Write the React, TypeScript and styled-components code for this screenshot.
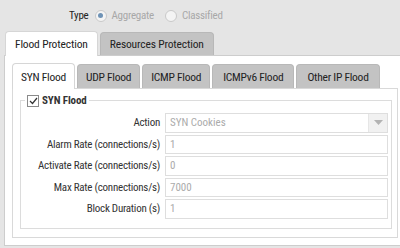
import React from "react";
import styled, { createGlobalStyle } from "styled-components";

const GlobalStyle = createGlobalStyle`
  html, body { margin: 0; padding: 0; }
  body {
    background: #e5e5e5;
    overflow: hidden;
    font-family: "Roboto Condensed", "Liberation Sans Narrow", "Arial Narrow", sans-serif;
    color: #333;
  }
`;

const Page = styled.div`
  width: 420px;
  height: 248px;
  padding-left: 4px;
  box-sizing: border-box;
`;

const TypeRow = styled.div`
  display: flex;
  align-items: center;
  height: 31px;
  padding-left: 65px;
  font-size: 11px;
  letter-spacing: -0.25px;
`;

const TypeLabel = styled.span`
  color: #222;
  margin-right: 6px;
`;

const RadioItem = styled.label`
  display: flex;
  align-items: center;
  gap: 5px;
  color: #a8a8a8;
  margin-right: 11px;
`;

const RadioCircle = styled.span<{ $checked?: boolean }>`
  width: 10px;
  height: 10px;
  border-radius: 50%;
  border: 1px solid #c9c9c9;
  background: #f4f4f4;
  display: flex;
  align-items: center;
  justify-content: center;
  &::after {
    content: "";
    width: 5px;
    height: 5px;
    border-radius: 50%;
    background: ${(p) => (p.$checked ? "#6f93b6" : "transparent")};
  }
`;

const TabBar = styled.div<{ $inner?: boolean }>`
  display: flex;
  align-items: flex-end;
  gap: 2px;
  height: ${(p) => (p.$inner ? "25px" : "24px")};
  padding-left: ${(p) => (p.$inner ? "0" : "1px")};
  position: relative;
  z-index: 1;
`;

const Tab = styled.div<{ $active?: boolean; $inner?: boolean; $wide?: boolean }>`
  box-sizing: border-box;
  height: ${(p) => (p.$active ? (p.$inner ? "26px" : "25px") : p.$inner ? "24px" : "23px")};
  margin-bottom: ${(p) => (p.$active ? "-1px" : "0")};
  padding: 0 ${(p) => (p.$wide ? "10px" : p.$inner ? "8px" : "9px")};
  display: flex;
  align-items: center;
  font-size: 11.5px;
  letter-spacing: ${(p) => (p.$inner ? "-0.25px" : "-0.15px")};
  color: #222;
  background: ${(p) => (p.$active ? "#fff" : "#c3c3c3")};
  border: 1px solid ${(p) => (p.$active ? "#d6d6d6" : "#b8b8b8")};
  border-bottom: none;
  border-radius: 4px 4px 0 0;
  white-space: nowrap;
`;

const OuterPanel = styled.div`
  background: #fff;
  border: 1px solid #cdcdcd;
  padding: 7px 0 11px 7px;
  height: 191px;
  box-sizing: border-box;
`;

const InnerPanel = styled.div`
  background: #fff;
  border: 1px solid #d9d9d9;
  margin-right: 21px;
  padding: 5px 5px 8px 7px;
`;

const Fieldset = styled.fieldset`
  margin: 0;
  border: 1px solid #dcdcdc;
  padding: 6px 3px 9px 8px;
`;

const Legend = styled.legend`
  display: flex;
  align-items: center;
  gap: 3px;
  padding: 0 2px;
  margin-left: -4px;
  font-weight: bold;
  font-size: 11px;
  letter-spacing: -0.1px;
  color: #333;
`;

const CheckBox = styled.span`
  width: 10px;
  height: 10px;
  border: 1px solid #8a8a8a;
  background: #fff;
  display: flex;
  align-items: center;
  justify-content: center;
`;

const FormGrid = styled.div`
  display: grid;
  grid-template-columns: 131px 1fr;
  column-gap: 5px;
  row-gap: 2px;
  align-items: center;
`;

const Label = styled.div`
  text-align: right;
  font-size: 11px;
  letter-spacing: -0.25px;
  color: #333;
  white-space: nowrap;
`;

const Field = styled.div`
  box-sizing: border-box;
  height: 19.5px;
  border: 1px solid #dedede;
  background: #fff;
  display: flex;
  align-items: center;
  padding-left: 4px;
  font-size: 11px;
  color: #ababab;
`;

const FieldText = styled.span`
  flex: 1;
`;

const SelectButton = styled.span`
  width: 18px;
  align-self: stretch;
  background: #f1f1f1;
  border-left: 1px solid #e6e6e6;
  display: flex;
  align-items: center;
  justify-content: center;
`;

const rows: { label: string; value: string; select?: boolean }[] = [
  { label: "Action", value: "SYN Cookies", select: true },
  { label: "Alarm Rate (connections/s)", value: "1" },
  { label: "Activate Rate (connections/s)", value: "0" },
  { label: "Max Rate (connections/s)", value: "7000" },
  { label: "Block Duration (s)", value: "1" },
];

export default function App() {
  return (
    <>
      <GlobalStyle />
      <Page>
        <TypeRow>
          <TypeLabel>Type</TypeLabel>
          <RadioItem>
            <RadioCircle $checked />
            Aggregate
          </RadioItem>
          <RadioItem>
            <RadioCircle />
            Classified
          </RadioItem>
        </TypeRow>
        <TabBar>
          <Tab $active>Flood Protection</Tab>
          <Tab>Resources Protection</Tab>
        </TabBar>
        <OuterPanel>
          <TabBar $inner>
            <Tab $inner $active>SYN Flood</Tab>
            <Tab $inner>UDP Flood</Tab>
            <Tab $inner>ICMP Flood</Tab>
            <Tab $inner $wide>ICMPv6 Flood</Tab>
            <Tab $inner $wide>Other IP Flood</Tab>
          </TabBar>
          <InnerPanel>
            <Fieldset>
              <Legend>
                <CheckBox>
                  <svg width="9" height="8" viewBox="0 0 9 8">
                    <path d="M1 4 L3.5 6.5 L8 1" fill="none" stroke="#333" strokeWidth="1.2" />
                  </svg>
                </CheckBox>
                SYN Flood
              </Legend>
              <FormGrid>
                {rows.map((r) => (
                  <React.Fragment key={r.label}>
                    <Label>{r.label}</Label>
                    <Field>
                      <FieldText>{r.value}</FieldText>
                      {r.select && (
                        <SelectButton>
                          <svg width="9" height="5" viewBox="0 0 9 5">
                            <path d="M0 0 L9 0 L4.5 5 Z" fill="#b3b3b3" />
                          </svg>
                        </SelectButton>
                      )}
                    </Field>
                  </React.Fragment>
                ))}
              </FormGrid>
            </Fieldset>
          </InnerPanel>
        </OuterPanel>
      </Page>
    </>
  );
}
